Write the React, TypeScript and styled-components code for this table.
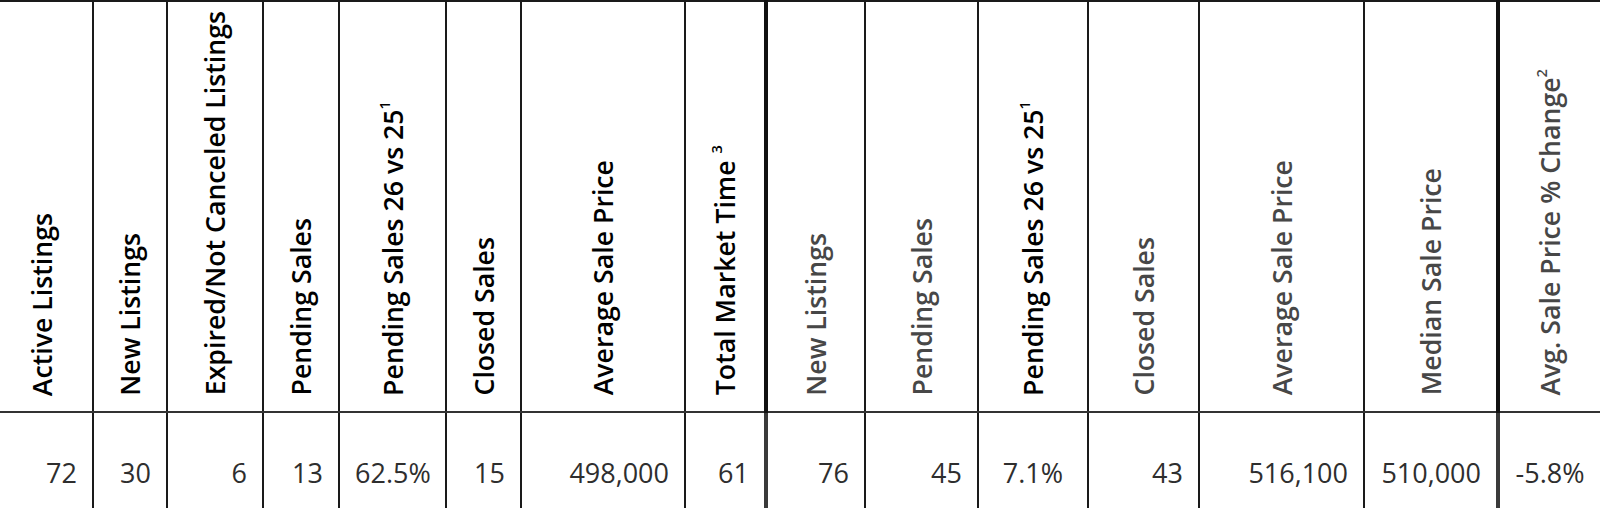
import React from "react";
import styled, { createGlobalStyle } from "styled-components";

const GlobalStyle = createGlobalStyle`
  html, body {
    margin: 0;
    padding: 0;
    background: #ffffff;
    overflow: hidden;
  }
  body {
    font-family: "Open Sans", "Noto Sans", "Liberation Sans", sans-serif;
  }
`;

const Page = styled.div`
  width: 1600px;
  height: 508px;
  overflow: hidden;
  background: #ffffff;
`;

const Table = styled.table`
  margin-left: -10px;
  width: 1610px;
  table-layout: fixed;
  border-collapse: collapse;
  font-family: "Open Sans", "Noto Sans", sans-serif;
`;

const HeadCell = styled.th<{ $thick?: boolean; $tone: "dark" | "grey" }>`
  height: 400px;
  padding: 0 0 9px 0;
  vertical-align: bottom;
  text-align: center;
  border-top: 2px solid #1a1a1a;
  border-bottom: 2px solid #333333;
  border-left: ${(p) => (p.$thick ? "4px solid #111111" : "2px solid #1a1a1a")};
  border-right: 2px solid #1a1a1a;
  color: ${(p) => (p.$tone === "dark" ? "#000000" : "#474747")};
  font-size: 26.7px;
  font-weight: 600;
  line-height: 1.25;
  white-space: nowrap;
`;

const Vertical = styled.span`
  display: inline-block;
  writing-mode: vertical-rl;
  transform: rotate(180deg);
`;

const Sup = styled.sup`
  font-size: 0.55em;
  line-height: 0;
  vertical-align: 0.6em;
`;

const DataCell = styled.td<{ $thick?: boolean; $align: "right" | "center" }>`
  height: 118px;
  padding: 0 15px;
  vertical-align: middle;
  text-align: ${(p) => p.$align};
  border-left: ${(p) => (p.$thick ? "4px solid #3a3a3a" : "2px solid #1a1a1a")};
  border-right: 2px solid #1a1a1a;
  color: #2e2e2e;
  font-size: 27px;
  font-weight: 400;
  white-space: nowrap;
`;

type Col = {
  label: string;
  sup?: string;
  width: number;
  tone: "dark" | "grey";
  value: string;
  align: "right" | "center";
  thick?: boolean;
};

const columns: Col[] = [
  { label: "Active Listings", width: 102, tone: "dark", value: "72", align: "right" },
  { label: "New Listings", width: 74, tone: "dark", value: "30", align: "right" },
  { label: "Expired/Not Canceled Listings", width: 96, tone: "dark", value: "6", align: "right" },
  { label: "Pending Sales", width: 76, tone: "dark", value: "13", align: "right" },
  { label: "Pending Sales 26 vs 25", sup: "1", width: 107, tone: "dark", value: "62.5%", align: "center" },
  { label: "Closed Sales", width: 75, tone: "dark", value: "15", align: "right" },
  { label: "Average Sale Price", width: 164, tone: "dark", value: "498,000", align: "right" },
  { label: "Total Market Time ", sup: "3", width: 81, tone: "dark", value: "61", align: "right" },
  { label: "New Listings", width: 99, tone: "grey", value: "76", align: "right", thick: true },
  { label: "Pending Sales", width: 113, tone: "grey", value: "45", align: "right" },
  { label: "Pending Sales 26 vs 25", sup: "1", width: 110, tone: "dark", value: "7.1%", align: "center" },
  { label: "Closed Sales", width: 111, tone: "grey", value: "43", align: "right" },
  { label: "Average Sale Price", width: 165, tone: "grey", value: "516,100", align: "right" },
  { label: "Median Sale Price", width: 134, tone: "grey", value: "510,000", align: "right" },
  { label: "Avg. Sale Price % Change", sup: "2", width: 103, tone: "grey", value: "-5.8%", align: "center", thick: true },
];

export default function App() {
  return (
    <Page>
      <GlobalStyle />
      <Table>
        <colgroup>
          {columns.map((c, i) => (
            <col key={i} style={{ width: c.width }} />
          ))}
        </colgroup>
        <thead>
          <tr>
            {columns.map((c, i) => (
              <HeadCell key={i} $tone={c.tone} $thick={c.thick}>
                <Vertical>
                  {c.label}
                  {c.sup && <Sup>{c.sup}</Sup>}
                </Vertical>
              </HeadCell>
            ))}
          </tr>
        </thead>
        <tbody>
          <tr>
            {columns.map((c, i) => (
              <DataCell key={i} $align={c.align} $thick={c.thick}>
                {c.value}
              </DataCell>
            ))}
          </tr>
        </tbody>
      </Table>
    </Page>
  );
}
